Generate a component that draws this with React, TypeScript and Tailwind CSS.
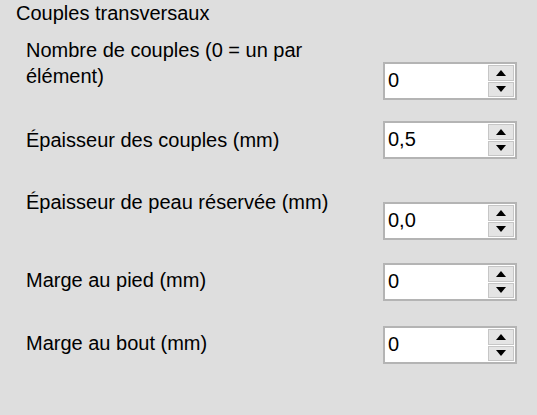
import { ReactNode } from 'react'

function SpinArrow({ up }: { up?: boolean }) {
  return (
    <svg width="10" height="6" viewBox="0 0 10 6" className="block">
      {up ? <path d="M5 0 L10 6 L0 6 Z" fill="#000" /> : <path d="M0 0 L10 0 L5 6 Z" fill="#000" />}
    </svg>
  )
}

function NumericBox({ value }: { value: string }) {
  return (
    <div className="flex h-[38px] w-[134px] border-2 border-[#b4b4b4] bg-white">
      <div className="flex flex-1 items-center pb-[2px] pl-[3px] text-[20px] leading-none text-black">{value}</div>
      <div className="flex w-[27px] flex-col gap-[1px] py-[1px] pr-[1px]">
        <div className="flex flex-1 items-center justify-center border border-[#c6c6c6] bg-[#e4e4e4]">
          <SpinArrow up />
        </div>
        <div className="flex flex-1 items-center justify-center border border-[#c6c6c6] bg-[#e4e4e4]">
          <SpinArrow />
        </div>
      </div>
    </div>
  )
}

function Label({ children, className }: { children: ReactNode; className?: string }) {
  return <div className={`ml-[26px] w-[330px] ${className ?? ''}`}>{children}</div>
}

export default function App() {
  return (
    <div className="h-[415px] w-[537px] overflow-hidden bg-[#dedede] font-['Liberation_Sans',Arial,sans-serif] text-[20px] leading-[26px] text-black">
      <div className="pl-[16px]">Couples transversaux</div>

      <div className="mt-[11px] flex items-start">
        <Label>
          Nombre de couples (0 = un par
          <br />
          élément)
        </Label>
        <div className="mr-[20px] ml-auto mt-[25px]">
          <NumericBox value="0" />
        </div>
      </div>

      <div className="mt-[21px] flex items-start">
        <Label className="mt-[6px]">Épaisseur des couples (mm)</Label>
        <div className="mr-[20px] ml-auto">
          <NumericBox value="0,5" />
        </div>
      </div>

      <div className="mt-[30px] flex items-start">
        <Label>Épaisseur de peau réservée (mm)</Label>
        <div className="mr-[20px] ml-auto mt-[13px]">
          <NumericBox value="0,0" />
        </div>
      </div>

      <div className="mt-[23px] flex items-start">
        <Label className="mt-[4px]">Marge au pied (mm)</Label>
        <div className="mr-[20px] ml-auto">
          <NumericBox value="0" />
        </div>
      </div>

      <div className="mt-[25px] flex items-start">
        <Label className="mt-[4px]">Marge au bout (mm)</Label>
        <div className="mr-[20px] ml-auto">
          <NumericBox value="0" />
        </div>
      </div>
    </div>
  )
}
